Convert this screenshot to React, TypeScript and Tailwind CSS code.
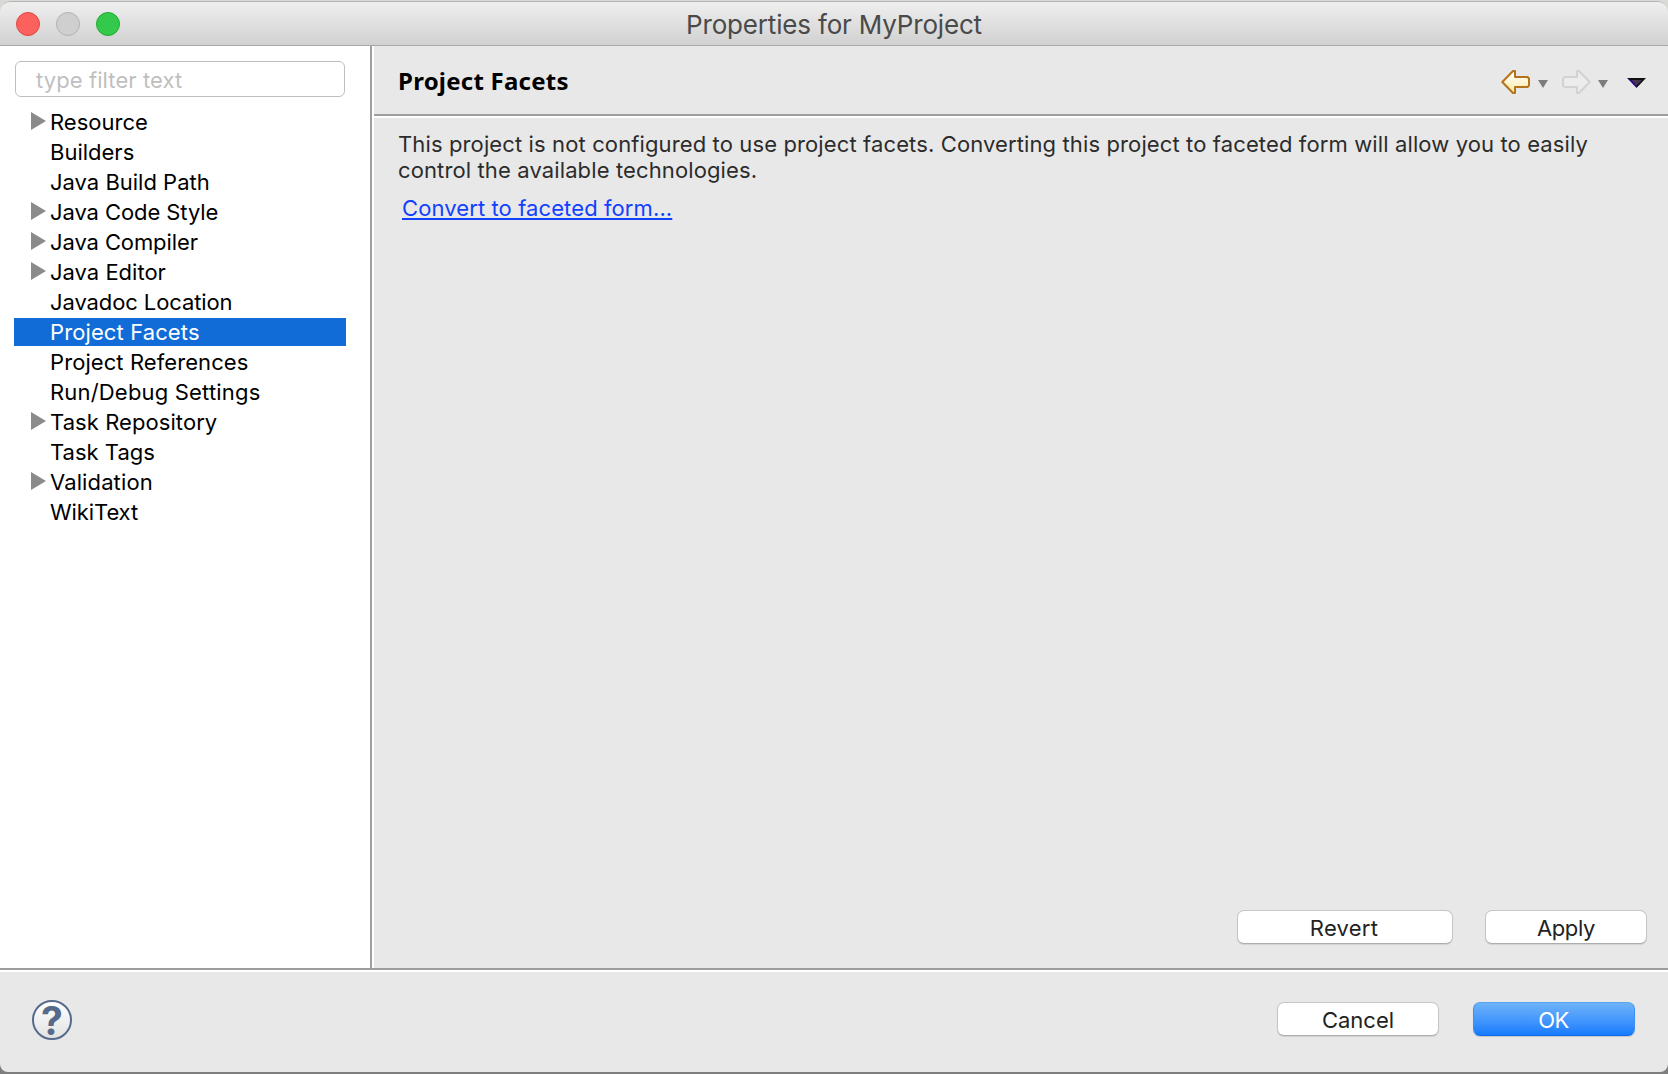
import React from "react";

type Item = { label: string; expandable?: boolean; selected?: boolean; spacing?: string };

const items: Item[] = [
  { label: "Resource", expandable: true },
  { label: "Builders" },
  { label: "Java Build Path" },
  { label: "Java Code Style", expandable: true, spacing: "tracking-[-0.08px]" },
  { label: "Java Compiler", expandable: true, spacing: "tracking-[-0.1px]" },
  { label: "Java Editor", expandable: true },
  { label: "Javadoc Location", spacing: "tracking-[-0.1px]" },
  { label: "Project Facets", selected: true, spacing: "tracking-[0.11px]" },
  { label: "Project References", spacing: "tracking-[0.08px]" },
  { label: "Run/Debug Settings", spacing: "tracking-[0.18px]" },
  { label: "Task Repository", expandable: true, spacing: "tracking-[0.07px]" },
  { label: "Task Tags" },
  { label: "Validation", expandable: true, spacing: "tracking-[0.12px]" },
  { label: "WikiText", spacing: "tracking-[-0.1px]" },
];

function TitleBar() {
  return (
    <header className="relative flex h-[45px] shrink-0 items-center justify-center rounded-t-[10px] border-t border-b border-t-[#b4b4b4] border-b-[#aaaaaa] bg-linear-to-b from-[#efefef] to-[#d1d1d1]">
      <div className="absolute top-[10px] left-4 flex gap-4">
        <span className="size-6 rounded-full border border-[#e2463f] bg-[#fc625d]" />
        <span className="size-6 rounded-full border border-[#b2b2b2] bg-[#cfcfcf]" />
        <span className="size-6 rounded-full border border-[#1fab31] bg-[#35c94b]" />
      </div>
      <h1 className="pt-px text-[26px] leading-[31px] tracking-[-0.18px] text-[#4a4a4a]">
        Properties for MyProject
      </h1>
    </header>
  );
}

function TreeRow({ label, expandable, selected, spacing }: Item) {
  return (
    <li
      className={`flex h-7 items-center pl-[17px] text-[22px] leading-7 ${
        selected ? "bg-[#126cd7] text-white" : "text-black"
      }`}
    >
      <span className="flex w-[19px] shrink-0 pb-[2px]">
        {expandable && (
          <svg width="15" height="18" viewBox="0 0 15 18" fill="#8b8b8b">
            <path d="M0 0L15 9L0 18Z" />
          </svg>
        )}
      </span>
      <span className={spacing ?? ""}>{label}</span>
    </li>
  );
}

function Sidebar() {
  return (
    <aside className="w-[374px] shrink-0 border-r-2 border-white bg-white">
      <div className="h-full border-r-2 border-[#9e9e9e] pt-[15px] pr-6 pl-[14px]">
        <input
          type="text"
          placeholder="type filter text"
          className="ml-px block h-9 w-[330px] rounded-[6px] border border-[#bebebe] bg-white pt-px pl-5 text-[22px] tracking-[0.09px] outline-none placeholder:text-[#bfbfbf]"
        />
        <ul className="mt-[11px] flex flex-col gap-[2px]">
          {items.map((item) => (
            <TreeRow key={item.label} {...item} />
          ))}
        </ul>
      </div>
    </aside>
  );
}

function SmallCaret() {
  return (
    <svg width="10" height="8" viewBox="0 0 10 8" fill="#7d7d7d">
      <path d="M0 0H10L5 8Z" />
    </svg>
  );
}

function Toolbar() {
  return (
    <div className="flex items-start">
      <svg width="29" height="24" viewBox="0 0 29 24">
        <defs>
          <linearGradient id="gold" x1="0" y1="0" x2="0" y2="1">
            <stop offset="0.2" stopColor="#fffdf2" />
            <stop offset="0.8" stopColor="#fdeeb4" />
          </linearGradient>
        </defs>
        <path
          d="M1.3 12L12 1H14V7H26.5L28 8.5V15.5L26.5 17H14V23H12Z"
          fill="url(#gold)"
          stroke="#b5731a"
          strokeWidth="2"
          strokeLinejoin="round"
        />
      </svg>
      <span className="mt-[10px] ml-[8px]">
        <SmallCaret />
      </span>
      <svg className="ml-[14px]" width="29" height="24" viewBox="0 0 29 24">
        <path
          d="M27.7 12L17 1H15V7H2.5L1 8.5V15.5L2.5 17H15V23H17Z"
          fill="#ececec"
          stroke="#d2d2d2"
          strokeWidth="2"
          strokeLinejoin="round"
        />
      </svg>
      <span className="mt-[10px] ml-[7px]">
        <SmallCaret />
      </span>
      <svg className="mt-[8px] ml-[19px]" width="19" height="10" viewBox="0 0 19 10">
        <path d="M2 1H17L9.5 9Z" fill="#46344c" />
        <path d="M0 0H3L10 8L9.5 10Z" fill="#2c0a86" />
        <path d="M9.5 10V7.5L15 2H3L1 0H19Z" fill="#101010" />
      </svg>
    </div>
  );
}

type ButtonProps = { label: string; width: string; primary?: boolean; spacing?: string };

function Button({ label, width, primary, spacing }: ButtonProps) {
  return (
    <button
      className={`h-[34px] rounded-[7px] border pt-[2px] text-[22px] leading-[30px] ${width} ${spacing ?? ""} ${
        primary
          ? "border-t-[#5aa5ef] border-r-[#3f8ff2] border-b-[#0f67f0] border-l-[#3f8ff2] bg-linear-to-b from-[#6eb3f8] to-[#147bfe] text-white shadow-[0_1px_1px_rgba(0,0,0,0.15)]"
          : "border-[#c6c6c6] border-b-[#adadad] bg-white text-[#222222] shadow-[0_1px_1px_rgba(0,0,0,0.1)]"
      }`}
    >
      {label}
    </button>
  );
}

function FacetsPage() {
  return (
    <main className="flex min-w-0 flex-1 flex-col">
      <div className="flex h-[72px] shrink-0 items-start justify-between border-b-2 border-white">
        <div className="flex h-[70px] w-full justify-between border-b-2 border-[#9e9e9e] pr-[22px] pl-6">
          <h2 className="pt-[18px] font-['Noto_Sans'] text-[24px] leading-[33px] font-bold tracking-[0.24px] text-black">
            Project Facets
          </h2>
          <div className="pt-6">
            <Toolbar />
          </div>
        </div>
      </div>
      <div className="flex-1 pt-[13px] pl-6 text-[22px] leading-[26px]">
        <p className="tracking-[0.12px] whitespace-nowrap text-[#2c2c2c]">
          This project is not configured to use project facets. Converting this project to faceted form will allow you to easily
          <br />
          control the available technologies.
        </p>
        <a
          href="#"
          className="mt-3 ml-1 inline-block tracking-[0.1px] text-[#1140ff] underline decoration-2 underline-offset-[2px] [text-decoration-skip-ink:none]"
        >
          Convert to faceted form...
        </a>
      </div>
      <div className="flex justify-end gap-8 pr-[21px] pb-6">
        <Button label="Revert" width="w-[216px] pr-[2px]" spacing="tracking-[0.25px]" />
        <Button label="Apply" width="w-[162px]" spacing="tracking-[-0.35px]" />
      </div>
    </main>
  );
}

function Footer() {
  return (
    <footer className="flex h-[104px] shrink-0 items-start justify-between border-t-2 border-[#9e9e9e]">
      <div className="flex h-full w-full items-start justify-between border-t-2 border-white pt-7 pr-[33px] pl-8">
        <button
          aria-label="Help"
          className="flex size-10 items-center justify-center rounded-full border-2 border-[#566a8c] bg-linear-to-b from-white to-[#e2e2e2] pt-px text-[39px] leading-9 font-bold text-[#566a8c]"
        >
          ?
        </button>
        <div className="flex gap-[34px] pt-[2px]">
          <Button label="Cancel" width="w-[162px]" />
          <Button label="OK" width="w-[162px] pr-px" primary spacing="tracking-[-0.5px]" />
        </div>
      </div>
    </footer>
  );
}

export default function App() {
  return (
    <div className="flex h-[1074px] w-[1668px] flex-col overflow-hidden bg-linear-to-b from-[#d9d9d6] from-50% to-[#7e7e7e] to-50% pt-px pb-[2px] font-['Inter',sans-serif]">
      <div className="flex flex-1 flex-col overflow-hidden rounded-t-[10px] rounded-b-[8px] bg-[#e8e8e8]">
        <TitleBar />
        <div className="flex min-h-0 flex-1">
          <Sidebar />
          <FacetsPage />
        </div>
        <Footer />
      </div>
    </div>
  );
}
